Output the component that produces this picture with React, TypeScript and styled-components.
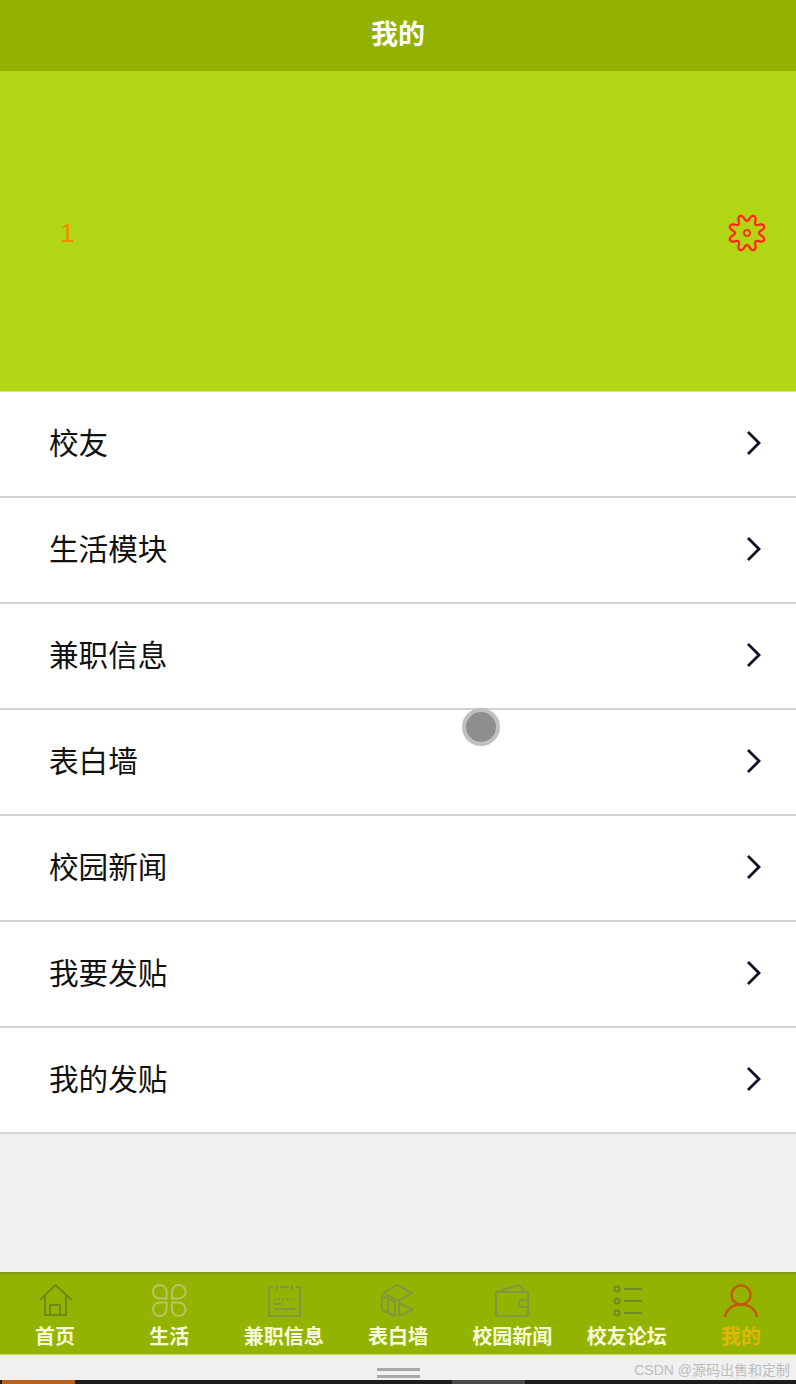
import React from 'react';
import styled, { createGlobalStyle } from 'styled-components';

const menuItems = ['校友', '生活模块', '兼职信息', '表白墙', '校园新闻', '我要发贴', '我的发贴'];

// wavy eight tooth outline, teeth either side of straight up
const gearPath = Array.from({ length: 144 }, (_, i) => {
  const a = (i / 144) * Math.PI * 2;
  const c = Math.cos(8 * (a - Math.PI / 8));
  const r = 15.2 + 3.2 * Math.sign(c) * Math.pow(Math.abs(c), 0.7);
  return `${i === 0 ? 'M' : 'L'}${(20 + r * Math.cos(a)).toFixed(2)} ${(20 + r * Math.sin(a)).toFixed(2)}`;
}).join(' ') + ' Z';

const GearIcon = () => (
  <svg width="40" height="40" viewBox="0 0 40 40" fill="none" strokeLinejoin="round">
    <path d={gearPath} stroke="#f5a01e" strokeWidth="3.4" />
    <circle cx="20" cy="20" r="3" stroke="#f5a01e" strokeWidth="3" />
    <path d={gearPath} stroke="#ee2a0c" strokeWidth="2" />
    <circle cx="20" cy="20" r="3" stroke="#ee2a0c" strokeWidth="1.6" />
  </svg>
);

const HomeIcon = () => (
  <svg width="36" height="36" viewBox="0 0 36 36" fill="none" stroke="currentColor" strokeWidth="2">
    <path d="M3 16 L18.5 1 L34.5 16" />
    <path d="M8 12 V31 H29 V12" />
    <path d="M13 31 V21 H23 V31" />
  </svg>
);

const CloverIcon = () => (
  <svg width="36" height="36" viewBox="0 0 36 36" fill="none" stroke="currentColor" strokeWidth="2">
    <path d="M15.5 14.5 H8.7 A6.8 6.8 0 1 1 15.5 7.7 Z" />
    <path d="M21 14.5 H27.8 A6.8 6.8 0 1 0 21 7.7 Z" />
    <path d="M15.5 18.5 H8.7 A6.8 6.8 0 1 0 15.5 25.3 Z" />
    <path d="M21 18.5 H27.8 A6.8 6.8 0 1 1 21 25.3 Z" />
  </svg>
);

const NoteIcon = () => (
  <svg width="36" height="36" viewBox="0 0 36 36" fill="none" stroke="currentColor" strokeWidth="2">
    <path d="M7 3 H3 V32 H34 V3 H30" />
    <path d="M11 1 V6 M26 1 V6 M14 3 H23" />
    <path d="M8 15 H29" strokeDasharray="2 2" />
    <path d="M8 20 H16 M8 25 H29" />
  </svg>
);

const BoxIcon = () => (
  <svg width="36" height="36" viewBox="0 0 36 36" fill="none" stroke="currentColor" strokeWidth="2" strokeLinejoin="round">
    <path d="M3.3 9 L17 1 L32 9 L18 16.7 Z" />
    <path d="M1.7 12 V26 L15 32 V18 Z" />
    <path d="M8 15 V29" />
    <path d="M19 19 L32.7 25.7 L19 32 Z" />
  </svg>
);

const WalletIcon = () => (
  <svg width="36" height="36" viewBox="0 0 36 36" fill="none" stroke="currentColor" strokeWidth="2" strokeLinejoin="round">
    <path d="M2 9 V30 Q2 32 4 32 H32 Q34 32 34 30 V9 Q34 8 33 8 H3 Q2 8 2 9 Z" />
    <path d="M3 8 L25 1 L30 8" />
    <path d="M34 16 H28 Q25 16 25 19 Q25 23 28 23 H34" />
  </svg>
);

const ListIcon = () => (
  <svg width="36" height="36" viewBox="0 0 36 36" fill="none" stroke="currentColor" strokeWidth="2">
    <circle cx="8" cy="5" r="2.6" />
    <circle cx="8" cy="17" r="2.6" />
    <circle cx="8" cy="29" r="2.6" />
    <path d="M15 5 H33 M15 17 H33 M15 29 H33" />
  </svg>
);

const UserIcon = () => (
  <svg width="36" height="36" viewBox="0 0 36 36" fill="none" stroke="currentColor" strokeWidth="2.4">
    <circle cx="18" cy="11" r="9.5" />
    <path d="M2 33 C3 25 10 20.5 18 20.5 C26 20.5 33 25 34 33" />
  </svg>
);

const tabs = [
  { label: '首页', icon: <HomeIcon />, tone: '#6f8a18' },
  { label: '生活', icon: <CloverIcon />, tone: '#b4c760' },
  { label: '兼职信息', icon: <NoteIcon />, tone: '#84963f' },
  { label: '表白墙', icon: <BoxIcon />, tone: '#84963f' },
  { label: '校园新闻', icon: <WalletIcon />, tone: '#84963f' },
  { label: '校友论坛', icon: <ListIcon />, tone: '#6f8a28' },
  { label: '我的', icon: <UserIcon />, tone: '#c45a08', active: true },
];

export default function App() {
  return (
    <Page>
      <GlobalStyle />
      <Header>我的</Header>
      <Hero>
        <Count>1</Count>
        <GearIcon />
      </Hero>
      <Menu>
        {menuItems.map((item) => (
          <MenuRow key={item}>
            <span>{item}</span>
            <svg width="18" height="26" viewBox="0 0 18 26" fill="none" stroke="#0b1024" strokeWidth="2.8">
              <path d="M3 2 L14 13 L3 24" />
            </svg>
          </MenuRow>
        ))}
      </Menu>
      <Filler />
      <TabBar>
        {tabs.map((tab) => (
          <Tab key={tab.label} $active={tab.active} $tone={tab.tone}>
            {tab.icon}
            <span>{tab.label}</span>
          </Tab>
        ))}
      </TabBar>
      <HandleStrip>
        <Handle />
      </HandleStrip>
      <TaskBar>
        <TaskOrange />
        <TaskGray />
      </TaskBar>
      <TouchDot />
      <Watermark>CSDN @源码出售和定制</Watermark>
    </Page>
  );
}

const GlobalStyle = createGlobalStyle`
  html, body {
    margin: 0;
    padding: 0;
    background: #f0f0f0;
  }
`;

const Page = styled.div`
  position: relative;
  width: 796px;
  height: 1384px;
  overflow: hidden;
  display: flex;
  flex-direction: column;
  background: #f0f0f0;
  font-family: "Liberation Sans", "Microsoft YaHei", "Noto Sans CJK SC", sans-serif;
`;

const Header = styled.div`
  height: 71px;
  flex: none;
  display: flex;
  align-items: center;
  justify-content: center;
  padding-bottom: 7px;
  box-sizing: border-box;
  background: #93b200;
  color: #ffffff;
  font-size: 27px;
  font-weight: bold;
`;

const Hero = styled.div`
  height: 321px;
  flex: none;
  box-sizing: border-box;
  padding: 4px 29px 0 60px;
  display: flex;
  align-items: center;
  justify-content: space-between;
  background: #b1d613;
  border-bottom: 1px solid #d5e88a;
`;

const Count = styled.span`
  color: #f58a00;
  font-size: 26px;
  line-height: 1;
`;

const Menu = styled.div`
  flex: none;
  background: #ffffff;
`;

const MenuRow = styled.div`
  height: 106px;
  box-sizing: border-box;
  padding: 0 33px 0 49px;
  display: flex;
  align-items: center;
  justify-content: space-between;
  border-bottom: 2px solid #d2d2d2;
  color: #111111;
  font-size: 29.6px;

  span {
    padding-bottom: 5px;
  }

  svg {
    margin-bottom: 2px;
  }
`;

const Filler = styled.div`
  flex: 1;
`;

const TabBar = styled.div`
  height: 83px;
  flex: none;
  box-sizing: border-box;
  display: grid;
  grid-template-columns: repeat(7, 114.33px);
  justify-content: center;
  background: #92b300;
  border-top: 2px solid #7f9a10;
  border-bottom: 1px solid #c5d86a;
`;

const Tab = styled.div<{ $active?: boolean; $tone: string }>`
  display: flex;
  flex-direction: column;
  align-items: center;
  padding-top: 10px;
  color: ${(p) => p.$tone};

  span {
    margin-top: 5px;
    color: ${(p) => (p.$active ? '#e0b800' : '#f8fbd8')};
    font-size: 20px;
    font-weight: bold;
    line-height: 24px;
    white-space: nowrap;
  }
`;

const HandleStrip = styled.div`
  height: 25px;
  flex: none;
  display: flex;
  justify-content: center;
  align-items: flex-end;
  padding-bottom: 2px;
  box-sizing: border-box;
  background: #f0f0f0;
`;

const Handle = styled.div`
  width: 43px;
  height: 4px;
  border-top: 3px solid #a8a8a8;
  border-bottom: 3px solid #a8a8a8;
  background: #f0f0f0;
`;

const TaskBar = styled.div`
  height: 4px;
  flex: none;
  display: flex;
  background: #1c1c1c;
`;

const TaskOrange = styled.div`
  width: 73px;
  margin-left: 2px;
  background: #b8601c;
`;

const TaskGray = styled.div`
  width: 73px;
  margin-left: 377px;
  background: #4a4a4a;
`;

const TouchDot = styled.div`
  position: absolute;
  left: 462px;
  top: 708px;
  width: 38px;
  height: 38px;
  box-sizing: border-box;
  border-radius: 50%;
  background: #8e8e8e;
  border: 4px solid #c0c0c0;
`;

const Watermark = styled.div`
  position: absolute;
  right: 6px;
  top: 1361px;
  color: #bdbdbd;
  font-size: 14px;
  line-height: 18px;
  white-space: nowrap;
`;
